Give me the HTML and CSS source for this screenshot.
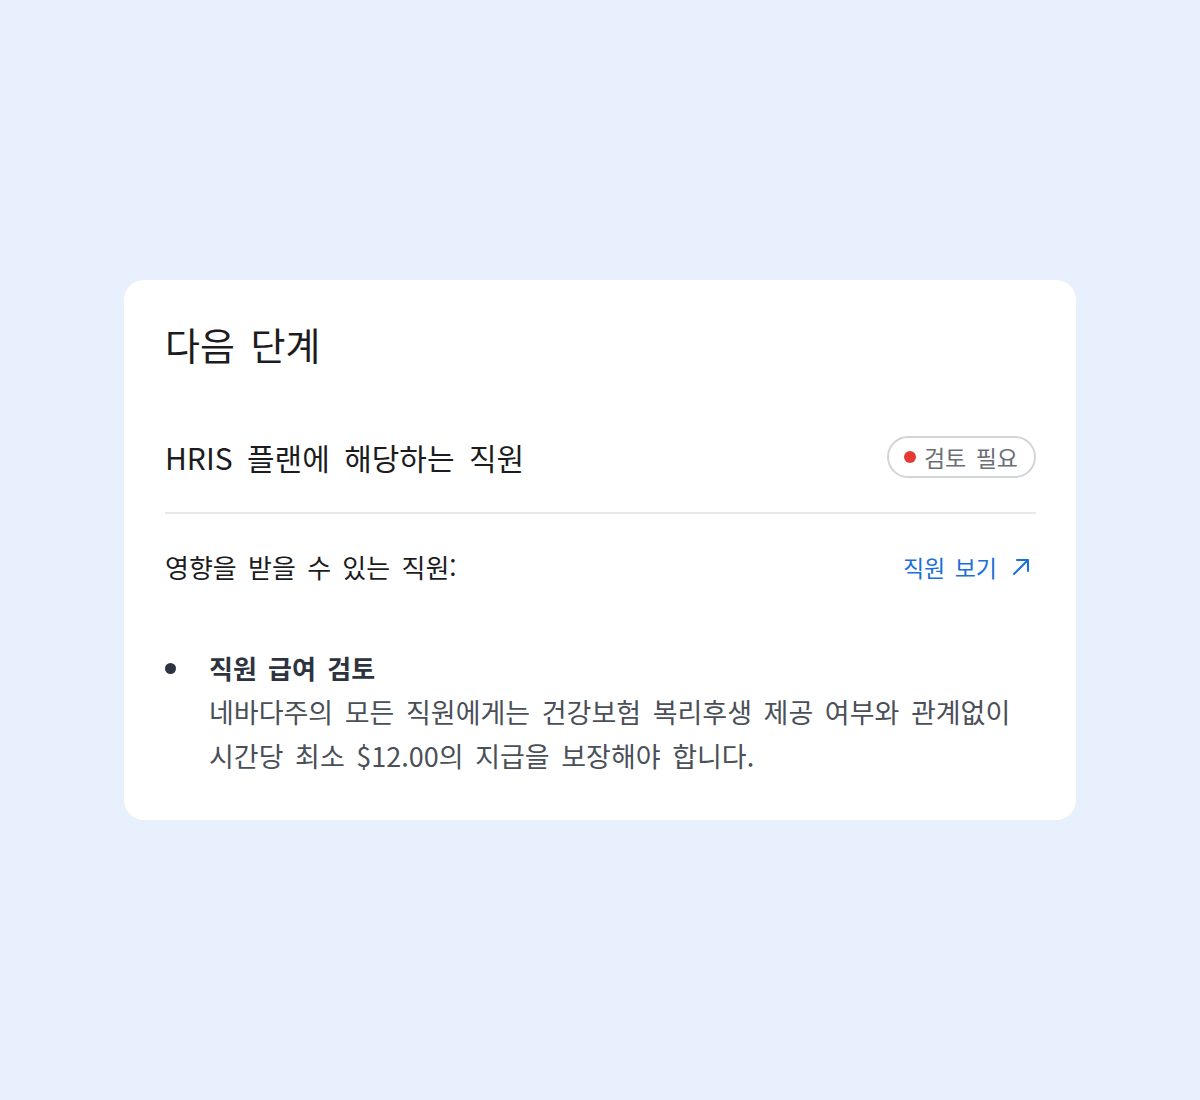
FILE: index.html
```html
<!DOCTYPE html>
<html lang="ko">
<head>
<meta charset="utf-8">
<link rel="stylesheet" href="styles.css">
</head>
<body>
<div class="page">
  <section class="card">
    <h1 class="title">다음 단계</h1>
    <div class="row head">
      <h2 class="subtitle">HRIS 플랜에 해당하는 직원</h2>
      <span class="badge"><span class="dot"></span>검토 필요</span>
    </div>
    <div class="row affected">
      <span class="label">영향을 받을 수 있는 직원:</span>
      <a class="link" href="#">직원 보기
        <svg class="arrow" viewBox="0 0 20 20" width="20" height="20" aria-hidden="true">
          <path d="M3 17 L17 3 M6 3 H17 V14" fill="none" stroke="currentColor" stroke-width="2" stroke-linecap="round" stroke-linejoin="round"/>
        </svg>
      </a>
    </div>
    <ul class="list">
      <li class="item">
        <div class="item-title">직원 급여 검토</div>
        <p class="item-body">네바다주의 모든 직원에게는 건강보험 복리후생 제공 여부와 관계없이 시간당 최소 $12.00의 지급을 보장해야 합니다.</p>
      </li>
    </ul>
  </section>
</div>
</body>
</html>
```

FILE: styles.css
```css
* { box-sizing: border-box; }
html, body { margin: 0; padding: 0; }
body {
  background: #e8f0fe;
  font-family: "Noto Sans CJK KR", "Noto Sans", sans-serif;
  color: #1f2023;
  word-break: keep-all;
}
.page {
  min-height: 1100px;
  display: flex;
  align-items: flex-start;
  justify-content: center;
  padding-top: 280px;
}
.card {
  width: 952px;
  height: 540px;
  background: #ffffff;
  border-radius: 20px;
  padding: 26px 40px 0 41px;
}
.title {
  margin: 0;
  font-size: 38px;
  font-weight: 400;
  line-height: 76px;
  word-spacing: 5px;
  color: #1c1c1e;
}
.row {
  display: flex;
  align-items: center;
  justify-content: space-between;
}
.head {
  margin-top: 54px;
  padding-bottom: 34px;
  border-bottom: 2px solid #e6e8eb;
}
.subtitle {
  margin: 0;
  font-size: 30px;
  font-weight: 400;
  line-height: 42px;
  word-spacing: 6px;
  color: #1c1c1e;
}
.badge {
  display: inline-flex;
  align-items: center;
  height: 42px;
  padding: 0 16px 0 15px;
  border: 2px solid #d2d4d7;
  border-radius: 21px;
  font-size: 23px;
  word-spacing: 3px;
  color: #6b6f75;
  gap: 8px;
}
.dot {
  width: 12px;
  height: 12px;
  border-radius: 50%;
  background: #e53935;
}
.affected {
  margin-top: 33px;
}
.label {
  font-size: 26px;
  line-height: 40px;
  word-spacing: 4px;
  color: #1c1c1e;
}
.link {
  display: inline-flex;
  align-items: center;
  gap: 14px;
  font-size: 23px;
  line-height: 40px;
  word-spacing: 3px;
  color: #1a6fd8;
  text-decoration: none;
  margin-right: 5px;
}
.arrow { display: block; }
.list {
  list-style: none;
  margin: 59px 0 0 0;
  padding: 0;
}
.item {
  position: relative;
  padding-left: 44px;
}
.item::before {
  content: "";
  position: absolute;
  left: 0;
  top: 17px;
  width: 11px;
  height: 11px;
  border-radius: 50%;
  background: #2d3440;
}
.item-title {
  font-size: 26px;
  font-weight: 700;
  line-height: 44px;
  word-spacing: 4px;
  color: #2d3440;
}
.item-body {
  margin: 0;
  font-size: 27px;
  line-height: 44px;
  word-spacing: 4px;
  color: #4a4f58;
}
```
